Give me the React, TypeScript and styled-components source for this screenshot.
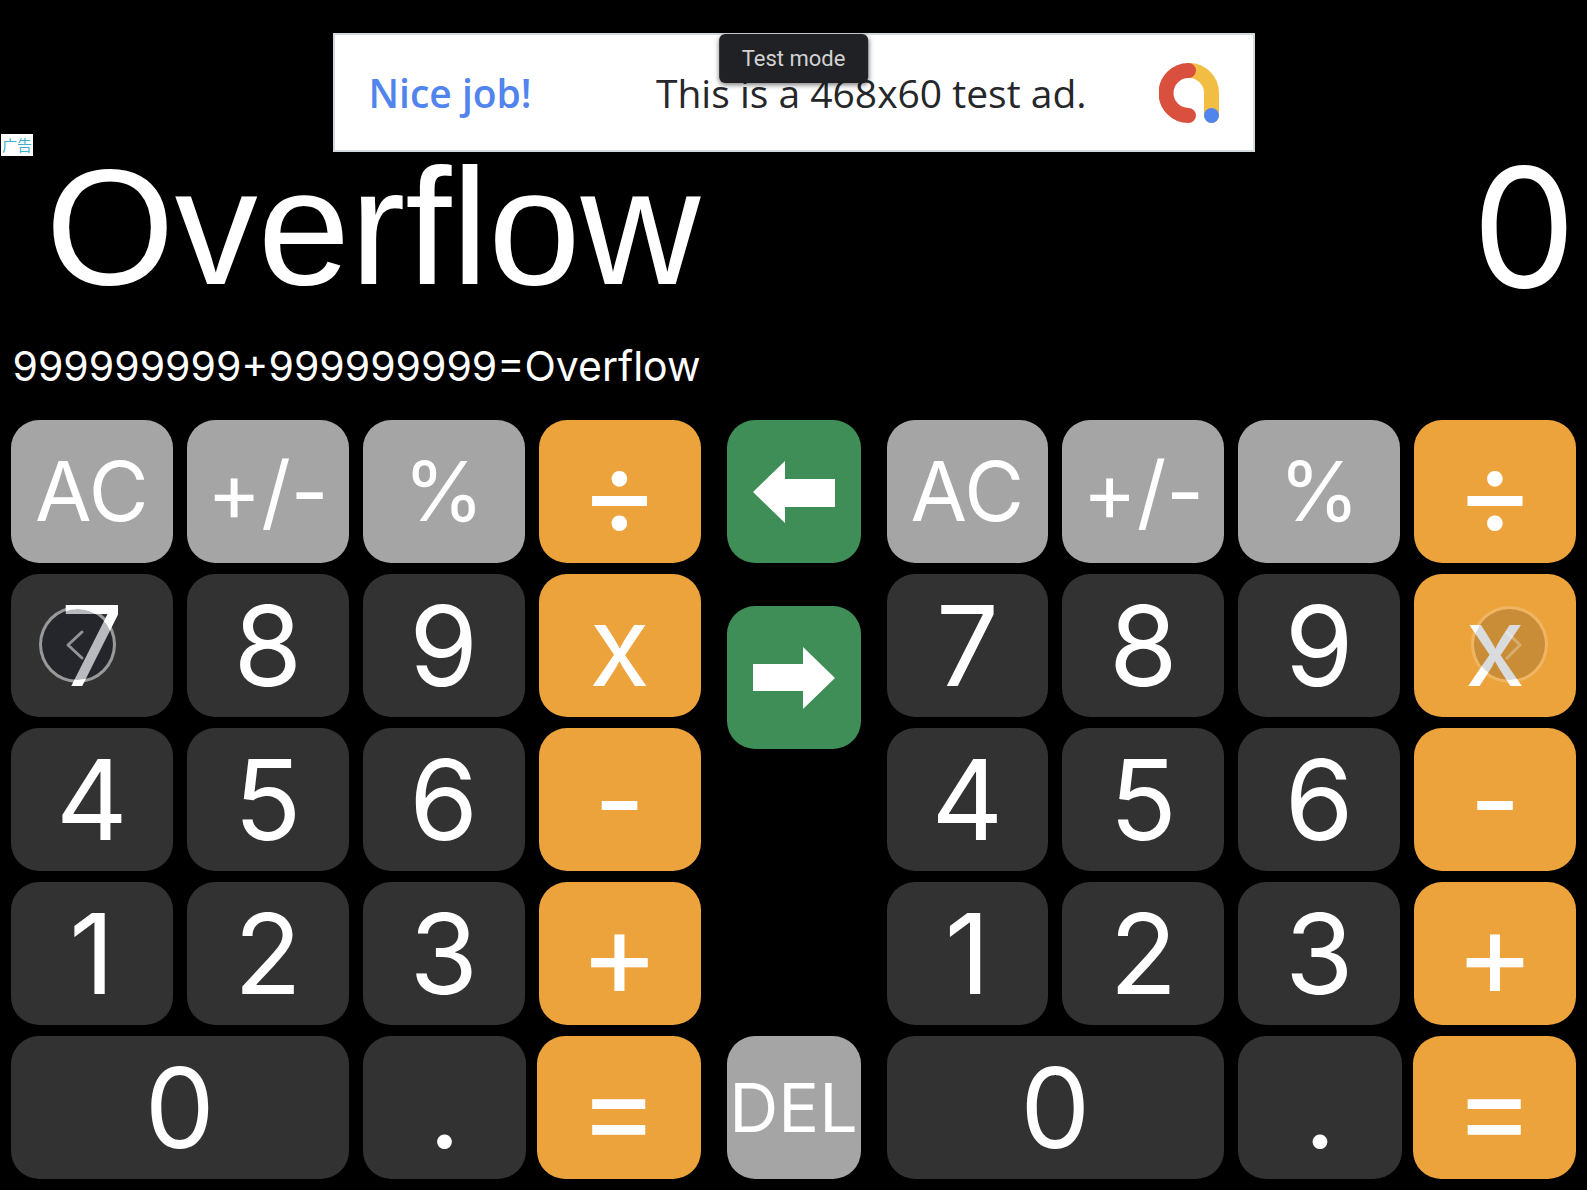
import React from "react";
import styled, { createGlobalStyle } from "styled-components";

const GlobalStyle = createGlobalStyle`
  * { box-sizing: border-box; }
  body { margin: 0; background: #fff; }
  button, a { font: inherit; color: inherit; text-decoration: none; }
`;

const Page = styled.main`
  min-height: 100vh;
  display: flex;
  flex-direction: column;
  position: relative;
  background: #000;
  color: #fff;
  border-bottom: 1px solid #fff;
  font-family: Inter, Roboto, sans-serif;
`;

const AdRow = styled.header`
  display: flex;
  justify-content: center;
  padding: 33px 12px 0;
`;

const Banner = styled.a`
  position: relative;
  display: flex;
  align-items: center;
  gap: 72px;
  width: 100%;
  max-width: 922px;
  height: 119px;
  padding: 0 34px;
  background: #fff;
  border: 2px solid #d3dadd;
  color: #25272a;
  font-family: "Open Sans", Roboto, sans-serif;
  font-size: 39px;
  line-height: 48px;
  white-space: nowrap;
`;

const Praise = styled.strong`
  margin-right: auto;
  color: #5284ee;
  font-weight: 600;
`;

const TestMode = styled.span`
  position: absolute;
  top: -1px;
  left: 50%;
  transform: translateX(-50%);
  padding: 0 23px;
  border-radius: 6px;
  background: #202124;
  box-shadow: 0 2px 5px rgba(0, 0, 0, 0.5);
  color: #d2d2d2;
  font-family: Roboto, sans-serif;
  font-size: 22px;
  line-height: 49px;
`;

const AdTag = styled.a`
  position: absolute;
  top: 134px;
  left: 1px;
  padding: 0 1px;
  background: #fff;
  color: #3fb0cf;
  font-family: "Noto Sans CJK SC", sans-serif;
  font-size: 15px;
  line-height: 22px;
`;

const Columns = styled.div`
  display: grid;
  grid-template-columns: minmax(0, 1fr) 134px minmax(0, 1fr);
  column-gap: 26px;
  padding: 0 11px;
`;

const Screens = styled(Columns)`
  height: 268px;
`;

const Screen = styled.section<{ $last?: boolean }>`
  grid-column: ${(p) => (p.$last ? 3 : 1)};
  text-align: right;
  white-space: nowrap;
`;

const Result = styled.output<{ $message?: boolean }>`
  display: block;
  font-family: ${(p) => (p.$message ? '"Liberation Sans", Arial, sans-serif' : "inherit")};
  font-size: ${(p) => (p.$message ? "166px" : "165px")};
  line-height: 150px;
`;

const History = styled.p`
  margin: 40px 0 0;
  font-size: 41px;
  line-height: 48px;
`;

const Pads = styled(Columns)`
  position: relative;
  padding-bottom: 11px;
`;

const Pad = styled.div`
  display: grid;
  gap: 11px;
`;

const KeyRow = styled.div<{ $split?: boolean }>`
  display: grid;
  grid-template-columns: ${(p) => (p.$split ? "repeat(2, minmax(0, 1fr))" : "repeat(4, minmax(0, 1fr))")};
  gap: 14px;
`;

const KeyPair = styled.div`
  display: grid;
  grid-template-columns: repeat(2, minmax(0, 1fr));
  gap: 11px;
`;

const tones = { grey: "#a5a5a5", dark: "#323232", orange: "#eca33c", green: "#3f8e57" };
const sizes = { small: "68px", medium: "82px", large: "111px", symbol: "120px" };

const Key = styled.button<{ $tone: keyof typeof tones; $size?: keyof typeof sizes }>`
  display: flex;
  align-items: center;
  justify-content: center;
  height: 143px;
  padding: 0;
  border: 0;
  border-radius: 28px;
  background: ${(p) => tones[p.$tone]};
  color: #fff;
  font-size: ${(p) => sizes[p.$size ?? "large"]};
  line-height: 143px;
`;

const Transfer = styled.div`
  display: flex;
  flex-direction: column;
  gap: 43px;

  > :last-child {
    margin-top: auto;
  }
`;

const Pager = styled.button<{ $side: "left" | "right" }>`
  position: absolute;
  top: 186px;
  ${(p) => p.$side}: 39px;
  width: 77px;
  height: 77px;
  display: flex;
  align-items: center;
  justify-content: center;
  padding: 0;
  border-radius: 50%;
  border: 3px solid rgba(255, 255, 255, ${(p) => (p.$side === "left" ? 0.5 : 0.2)});
  background: ${(p) => (p.$side === "left" ? "rgba(4, 6, 28, 0.28)" : "rgba(10, 14, 28, 0.15)")};
  background-clip: padding-box;
  color: rgba(255, 255, 255, ${(p) => (p.$side === "left" ? 0.5 : 0.28)});
`;

function Keypad({ name }: { name: string }) {
  return (
    <Pad role="group" aria-label={name}>
      <KeyRow>
        <Key $tone="grey" $size="medium">AC</Key>
        <Key $tone="grey" $size="medium">+/-</Key>
        <Key $tone="grey" $size="medium">%</Key>
        <Key $tone="orange" $size="symbol">÷</Key>
      </KeyRow>
      {["789x", "456-", "123+"].map((row) => (
        <KeyRow key={row}>
          {row.split("").map((k, i) => (
            <Key key={k} $tone={i === 3 ? "orange" : "dark"} $size={k === "+" ? "symbol" : "large"}>
              {k}
            </Key>
          ))}
        </KeyRow>
      ))}
      <KeyRow $split>
        <Key $tone="dark">0</Key>
        <KeyPair>
          <Key $tone="dark">.</Key>
          <Key $tone="orange" $size="symbol">=</Key>
        </KeyPair>
      </KeyRow>
    </Pad>
  );
}

function Chevron({ d }: { d: string }) {
  return (
    <svg width="32" height="32" viewBox="0 0 32 32" fill="none" stroke="currentColor" strokeWidth="3" strokeLinecap="round" strokeLinejoin="round" aria-hidden="true">
      <path d={d} />
    </svg>
  );
}

export default function App() {
  return (
    <Page>
      <GlobalStyle />
      <AdRow>
        <Banner href="#ad">
          <Praise>Nice job!</Praise>
          <span>This is a 468x60 test ad.</span>
          <svg width="60" height="60" viewBox="0 0 60 60" fill="none" strokeWidth="15" strokeLinecap="round" aria-hidden="true">
            <path d="M29.500 7.500A22.500 22.500 0 0 1 52.500 30V52.500" stroke="#f1bd42" />
            <path d="M29.500 7.500A22.500 22.500 0 0 0 29.500 52.500" stroke="#d9503f" />
            <circle cx="52.500" cy="52.500" r="7.500" fill="#5284ee" />
          </svg>
          <TestMode>Test mode</TestMode>
        </Banner>
      </AdRow>
      <AdTag href="#about-ads">广告</AdTag>
      <Screens>
        <Screen aria-label="Left display">
          <Result $message>Overflow</Result>
          <History>999999999+999999999=Overflow</History>
        </Screen>
        <Screen $last aria-label="Right display">
          <Result>0</Result>
        </Screen>
      </Screens>
      <Pads>
        <Keypad name="Left calculator" />
        <Transfer>
          <Key $tone="green" aria-label="Copy to left">
            <svg width="82" height="62" viewBox="0 0 82 62" fill="currentColor" aria-hidden="true">
              <path d="M0 31L32 0V18H82V46H32V62Z" />
            </svg>
          </Key>
          <Key $tone="green" aria-label="Copy to right">
            <svg width="82" height="62" viewBox="0 0 82 62" fill="currentColor" aria-hidden="true">
              <path d="M82 31L50 0V17H0V44H50V62Z" />
            </svg>
          </Key>
          <Key $tone="grey" $size="small">DEL</Key>
        </Transfer>
        <Keypad name="Right calculator" />
        <Pager $side="left" aria-label="Previous">
          <Chevron d="M20 3L6 16L20 29" />
        </Pager>
        <Pager $side="right" aria-label="Next">
          <Chevron d="M13 3L26 16L13 29" />
        </Pager>
      </Pads>
    </Page>
  );
}
